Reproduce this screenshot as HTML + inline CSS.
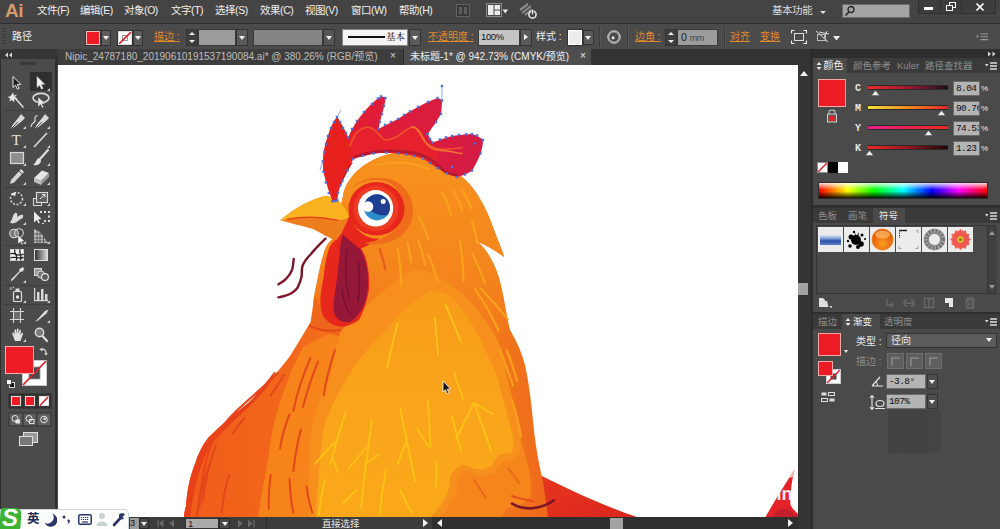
<!DOCTYPE html>
<html lang="zh-CN">
<head>
<meta charset="utf-8">
<title>Adobe Illustrator</title>
<style>
*{box-sizing:border-box;margin:0;padding:0}
html,body{width:1000px;height:529px;overflow:hidden;background:#4a4a4a}
body{position:relative;font-family:"Liberation Sans","Noto Sans CJK SC",sans-serif;font-size:11px;color:#e6e6e6;line-height:1}
.abs{position:absolute}
#menubar{left:0;top:0;width:1000px;height:23px;background:#444444}
#menubar .mi{position:absolute;top:5px;font-size:10.5px;color:#f0f0f0;white-space:nowrap;letter-spacing:-0.45px}
#ailogo{left:5px;top:1px;font-size:19px;font-weight:bold;color:#d99a6c;letter-spacing:-0.5px}
#ctrlbar{left:0;top:23px;width:1000px;height:26px;background:#4b4b4b;border-top:1px solid #2f2f2f}
#tabstrip{left:0;top:49px;width:1000px;height:16px;background:#343434}
.tab{position:absolute;top:0;height:16px;font-size:10px;color:#bdbdbd;white-space:nowrap;padding-top:3px}
#toolpanel{left:0;top:49px;width:57px;height:480px;background:#4a4a4a}
#canvas{left:58px;top:65px;width:740px;height:452px;background:#fff;overflow:hidden}
#vscroll{left:798px;top:65px;width:13px;height:464px;background:#343434;z-index:2}
#hbar{left:58px;top:517px;width:752px;height:12px;background:#3c3c3c}
#dock{left:810px;top:49px;width:190px;height:480px;background:#2e2e2e}
.panel{position:absolute;left:3px;width:187px;background:#4a4a4a}
.ptabs{position:absolute;left:0;top:0;width:187px;height:15px;background:#3a3a3a}
.ptab{position:absolute;top:0;height:15px;font-size:9.500px;color:#8e8e8e;padding-top:3px;white-space:nowrap}
.ptab.on{background:#4a4a4a;color:#f2f2f2}
.or{color:#e08a2c;text-decoration:underline}

.dd{position:absolute;background:#5a5a5a;border:1px solid #333}
.dd:after{content:"";position:absolute;left:50%;top:50%;margin:-2px 0 0 -3.5px;border:3.5px solid transparent;border-top:4px solid #f0f0f0;border-bottom:0}
.fld{position:absolute;background:#9c9c9c;border:1px solid #3a3a3a;color:#111;font-size:11px;white-space:nowrap;overflow:hidden}
.ct{position:absolute;top:8px;font-size:10px;white-space:nowrap}
.sp{position:absolute;background:#3e3e3e;border:1px solid #333}
.sp:before{content:"";position:absolute;left:2px;top:2px;border:3px solid transparent;border-bottom:3.5px solid #eee;border-top:0}
.sp:after{content:"";position:absolute;left:2px;bottom:2px;border:3px solid transparent;border-top:3.5px solid #eee;border-bottom:0}
.vsep{position:absolute;top:3px;width:1px;height:20px;background:#3a3a3a;border-right:1px solid #575757;box-sizing:content-box}

.pf{position:absolute;background:#b4b4b4;border:1px solid #6a6a6a;color:#111;font-family:"Liberation Mono","Noto Sans CJK SC",monospace;font-size:9.500px;white-space:nowrap;overflow:hidden;padding:2px 0 0 2px;letter-spacing:-0.600px}
.pl{position:absolute;font-size:10px;color:#e8e8e8;white-space:nowrap}
.pmenu{position:absolute;right:3px;top:4px}
</style>
</head>
<body>

<!-- MENUBAR -->
<div id="menubar" class="abs">
  <div id="ailogo" class="abs">Ai</div>
  <span class="mi" style="left:37px">文件(F)</span>
  <span class="mi" style="left:80px">编辑(E)</span>
  <span class="mi" style="left:124px">对象(O)</span>
  <span class="mi" style="left:171px">文字(T)</span>
  <span class="mi" style="left:215px">选择(S)</span>
  <span class="mi" style="left:260px">效果(C)</span>
  <span class="mi" style="left:305px">视图(V)</span>
  <span class="mi" style="left:351px">窗口(W)</span>
  <span class="mi" style="left:399px">帮助(H)</span>
  <span class="mi" style="left:772px;color:#dcdcdc">基本功能</span>
  <!-- Br icon -->
  <div class="abs" style="left:456px;top:4px;width:14px;height:13px;border:1px solid #626262;background:#393939"><div class="abs" style="left:2px;top:2px;width:3px;height:7px;background:#5c5c5c"></div><div class="abs" style="left:7px;top:2px;width:3px;height:7px;background:#5c5c5c"></div></div>
  <!-- arrange icon -->
  <svg class="abs" style="left:486px;top:3px" width="28" height="16" viewBox="0 0 28 16"><rect x="0.500" y="0.500" width="15" height="13" fill="#4a4a4a" stroke="#8a8a8a"/><rect x="2" y="2" width="5.500" height="10" fill="#ececec"/><rect x="8.500" y="2" width="5.500" height="4.500" fill="#ececec"/><rect x="8.500" y="7.500" width="5.500" height="4.500" fill="#ececec"/><path d="M16.500,6.500 L22,6.500 L19.250,10.500 Z" fill="#ececec"/></svg>
  <!-- sync icon -->
  <svg class="abs" style="left:519px;top:3px" width="20" height="17" viewBox="0 0 20 17"><path d="M1,7 L9,1 M3,10 L12,3 M6,12 L13,6" stroke="#8a8a8a" stroke-width="2.2" fill="none"/><circle cx="13.5" cy="11.5" r="3.6" fill="none" stroke="#f0f0f0" stroke-width="1.5"/><rect x="12.7" y="6.5" width="1.6" height="5" fill="#f0f0f0" stroke="#444" stroke-width="0.5"/></svg>
  <div class="abs" style="left:820px;top:11px;border:3px solid transparent;border-top:3.5px solid #ddd;border-bottom:0"></div>
  <!-- search -->
  <div class="abs" style="left:842px;top:4px;width:68px;height:14px;background:#a4a4a4;border:1px solid #6a6a6a"><svg class="abs" style="left:1px;top:0px" width="12" height="12" viewBox="0 0 12 12"><circle cx="7" cy="4.5" r="3" fill="none" stroke="#222" stroke-width="1.3"/><path d="M5,7 L1.5,10.5" stroke="#222" stroke-width="1.6"/></svg></div>
  <!-- window buttons -->
  <div class="abs" style="left:918px;top:0;width:23px;height:14px;background:#3d3d3d;border:1px solid #303030;border-top:0"><div class="abs" style="left:5px;top:7px;width:9px;height:3px;background:#fff"></div></div>
  <div class="abs" style="left:940px;top:0;width:22px;height:14px;background:#3d3d3d;border:1px solid #303030;border-top:0"><div class="abs" style="left:8px;top:2px;width:7px;height:6px;border:1.500px solid #fff"></div><div class="abs" style="left:5px;top:5px;width:7px;height:6px;border:1.500px solid #fff;background:#3d3d3d"></div></div>
  <div class="abs" style="left:961px;top:0;width:35px;height:14px;background:#3d3d3d;border:1px solid #303030;border-top:0"><svg class="abs" style="left:13px;top:2px" width="10" height="10" viewBox="0 0 10 10"><path d="M1.500,1.500 L8.500,8.500 M8.500,1.500 L1.500,8.500" stroke="#fff" stroke-width="1.700"/></svg></div>
</div>

<!-- CONTROL BAR -->
<div id="ctrlbar" class="abs">
  <div class="abs" style="left:3px;top:4px;width:3px;height:17px;background:repeating-linear-gradient(#333 0 1px,#4b4b4b 1px 3px)"></div>
  <span class="ct" style="left:12px;color:#f0f0f0">路径</span>
  <div class="abs" style="left:86px;top:7px;width:14px;height:14px;background:#ed1c24;border:1px solid #f4c0c0;outline:1px solid #333"></div>
  <div class="dd" style="left:101px;top:6px;width:10px;height:16px"></div>
  <div class="abs" style="left:118px;top:7px;width:14px;height:14px;background:#fff;border:1px solid #ddd;outline:1px solid #333;overflow:hidden"><svg width="12" height="12" viewBox="0 0 12 12" style="display:block"><rect x="3.500" y="3.500" width="5" height="5" fill="none" stroke="#999"/><path d="M0,12 L12,0" stroke="#e0202a" stroke-width="1.6"/></svg></div>
  <div class="dd" style="left:133px;top:6px;width:10px;height:16px"></div>
  <span class="ct or" style="left:154px">描边 :</span>
  <div class="sp" style="left:186px;top:5px;width:12px;height:17px"></div>
  <div class="fld" style="left:198px;top:5px;width:38px;height:17px"></div>
  <div class="dd" style="left:236px;top:5px;width:12px;height:17px"></div>
  <div class="fld" style="left:253px;top:5px;width:70px;height:17px;background:#858585"></div>
  <div class="dd" style="left:323px;top:5px;width:12px;height:17px;background:#555"></div>
  <div class="fld" style="left:342px;top:5px;width:66px;height:17px;background:#f4f4f4;border-color:#888"><div class="abs" style="left:5px;top:6px;width:37px;height:2px;background:#111"></div><span class="abs" style="left:43px;top:3px;font-size:9.500px;color:#111;font-family:'Liberation Serif','Noto Serif CJK SC',serif">基本</span></div>
  <div class="dd" style="left:409px;top:5px;width:12px;height:17px"></div>
  <span class="ct or" style="left:428px">不透明度 :</span>
  <div class="fld" style="left:478px;top:5px;width:42px;height:17px;background:#c4c4c4;padding:2px 0 0 2px;font-size:9.500px;letter-spacing:-0.400px">100%</div>
  <div class="abs" style="left:520px;top:5px;width:12px;height:17px;background:#5a5a5a;border:1px solid #333"><div class="abs" style="left:3px;top:4px;border:3.5px solid transparent;border-left:4px solid #f0f0f0;border-right:0"></div></div>
  <span class="ct" style="left:536px;color:#f0f0f0">样式 :</span>
  <div class="abs" style="left:568px;top:6px;width:14px;height:15px;background:#ececec;border:1px solid #fff;outline:1px solid #333"></div>
  <div class="dd" style="left:583px;top:6px;width:11px;height:15px"></div>
  <div class="vsep" style="left:599px"></div>
  <svg class="abs" style="left:607px;top:6px" width="14" height="14" viewBox="0 0 14 14"><circle cx="7" cy="7" r="6.2" fill="#8a8a8a" stroke="#d8d8d8" stroke-width="1"/><circle cx="7" cy="7" r="3.6" fill="#555" stroke="#222" stroke-width="0.8"/><circle cx="6" cy="8" r="1.4" fill="#eee"/></svg>
  <div class="vsep" style="left:627px"></div>
  <span class="ct or" style="left:635px">边角 :</span>
  <div class="sp" style="left:665px;top:5px;width:12px;height:17px"></div>
  <div class="fld" style="left:677px;top:5px;width:41px;height:17px;padding:2px 0 0 3px;font-size:10.5px;color:#222">0 <span style="font-size:9px;letter-spacing:-0.5px;color:#444">mm</span></div>
  <div class="vsep" style="left:724px"></div>
  <span class="ct or" style="left:730px">对齐</span>
  <span class="ct or" style="left:760px">变换</span>
  <svg class="abs" style="left:791px;top:6px" width="16" height="14" viewBox="0 0 16 14"><rect x="3.5" y="3.5" width="9" height="7" fill="none" stroke="#ddd" stroke-width="1"/><path d="M0.5,3.5 L0.5,0.5 L3.5,0.5 M12.5,0.5 L15.5,0.5 L15.5,3.5 M15.5,10.5 L15.5,13.5 L12.5,13.5 M3.5,13.5 L0.5,13.5 L0.5,10.5" fill="none" stroke="#eee" stroke-width="1.2"/></svg>
  <svg class="abs" style="left:815px;top:6px" width="28" height="14" viewBox="0 0 28 14"><rect x="2.5" y="4.5" width="8" height="6" fill="none" stroke="#bbb" stroke-width="1"/><path d="M1,1 L13,12 M4,2 L14,4 M12,1 L9,8" stroke="#ddd" stroke-width="1" fill="none"/><path d="M18,6 L25,6 L21.5,10.5 Z" fill="#eee"/></svg>
  <svg class="abs" style="left:976px;top:9px" width="12" height="8" viewBox="0 0 12 8"><path d="M0,2.500 L3,2.500 L1.500,5 Z" fill="#9a9a9a"/><path d="M4.500,1 L12,1 M4.500,3.800 L12,3.800 M4.500,6.600 L12,6.600" stroke="#9a9a9a" stroke-width="1.100"/></svg>
</div>

<!-- TAB STRIP -->
<div id="tabstrip" class="abs">
  <div class="tab" style="left:58px;width:346px;background:#3d3d3d;border-right:1px solid #2a2a2a;padding-left:7px"><span class="tt">Nipic_24787180_20190610191537190084.ai* @ 380.26% (RGB/预览)</span><span class="abs" style="left:332px;top:2px;color:#ddd">×</span></div>
  <div class="tab" style="left:404px;width:187px;background:#4e4e4e;color:#f0f0f0;padding-left:6px"><span class="tt">未标题-1* @ 942.73% (CMYK/预览)</span><span class="abs" style="left:176px;top:2px;color:#eee">×</span></div>
</div>

<!-- TOOL PANEL -->
<div id="toolpanel" class="abs">
<svg width="57" height="480" viewBox="0 49 57 480" style="position:absolute;left:0;top:0">
<rect x="0" y="49" width="57" height="480" fill="#2e2e2e"/>
<rect x="1" y="59" width="54" height="470" fill="#4b4b4b"/>
<rect x="0" y="49" width="57" height="10" fill="#363636"/>
<path d="M5,55 L8,52.5 L8,57.5 Z M9,55 L12,52.5 L12,57.5 Z" fill="#d8d8d8"/>
<rect x="20" y="62" width="16" height="3" fill="#3a3a3a"/>
<g stroke="#3e3e3e" stroke-width="1"><path d="M4,110.5 H52 M4,187.5 H52 M4,245.5 H52 M4,285.5 H52 M4,304.5 H52"/></g>
<!-- selected tool bg -->
<rect x="30" y="72" width="22" height="19" fill="#2f2f2f"/>
<g fill="#d6d6d6" stroke="none">
 <!-- small corner triangles -->
 <path d="M50,91 l0,-3 l-3,3z M26,129 l0,-3 l-3,3z M50,129 l0,-3 l-3,3z M26,148 l0,-3 l-3,3z M50,148 l0,-3 l-3,3z M26,166 l0,-3 l-3,3z M50,166 l0,-3 l-3,3z M26,185 l0,-3 l-3,3z M50,185 l0,-3 l-3,3z M26,206 l0,-3 l-3,3z M50,206 l0,-3 l-3,3z M26,225 l0,-3 l-3,3z M26,244 l0,-3 l-3,3z M50,244 l0,-3 l-3,3z M26,283 l0,-3 l-3,3z M26,303 l0,-3 l-3,3z M50,303 l0,-3 l-3,3z M50,323 l0,-3 l-3,3z M26,342 l0,-3 l-3,3z"/>
</g>
<!-- row1: selection arrows -->
<path d="M13,76.500 L13,87.500 L15.600,85.200 L17.400,89.200 L19.100,88.400 L17.300,84.500 L20.800,84.300 Z" fill="#1e1e1e" stroke="#e8e8e8" stroke-width="1"/>
<path d="M37,76.500 L37,87.500 L39.600,85.200 L41.400,89.200 L43.100,88.400 L41.300,84.500 L44.800,84.300 Z" fill="#f2f2f2" stroke="#bbb" stroke-width="0.500"/>
<!-- row2: wand, lasso -->
<g stroke="#dcdcdc" stroke-width="1.6" fill="none" stroke-linecap="round"><path d="M16,99 L23,107"/></g>
<path d="M13,92.5 l1,3 l3,-1 l-2,2.5 l2.5,2 l-3.2,0.3 l-0.3,3.2 l-2,-2.6 l-2.8,1.6 l1,-3 l-2.8,-1.4 l3,-0.9z" fill="#e4e4e4"/>
<ellipse cx="41" cy="98" rx="8" ry="4.6" fill="none" stroke="#dcdcdc" stroke-width="1.6"/>
<path d="M38,97 L38,107 L40.5,104.5 L42.3,108 L43.8,107.2 L42,104 L45.5,103.6 Z" fill="#e8e8e8" stroke="#444" stroke-width="0.4"/>
<!-- row3: pen tools -->
<g fill="#dadada"><path d="M21,114 L25,118 L22,121 L14.5,127 L11,128.5 L12.5,125 L18.5,117.5 Z"/><path d="M45,114 L49,118 L46,121 L38.5,127 L35,128.5 L36.5,125 L42.5,117.5 Z"/></g>
<path d="M12,128 L18,122" stroke="#4b4b4b" stroke-width="1"/><path d="M36,128 L42,122" stroke="#4b4b4b" stroke-width="1"/>
<path d="M31,127 C31,122 36,124 35,119 C34.5,117 36,115.5 37.5,116" fill="none" stroke="#dadada" stroke-width="1.2"/>
<!-- row4: T, line -->
<text x="11.500" y="145" font-family="'Liberation Serif',serif" font-size="15.500" fill="#e2e2e2">T</text>
<path d="M34,147 L47,133" stroke="#dcdcdc" stroke-width="1.6"/>
<!-- row5: rect, brush -->
<rect x="10.5" y="152.5" width="13" height="11" fill="#8e8e8e" stroke="#d8d8d8" stroke-width="1.2"/>
<path d="M48,150 L40,159" stroke="#dcdcdc" stroke-width="2.2" stroke-linecap="round"/><path d="M39,158 C36,159 36,163 33,165 C37,166 41,164 41,160.5 Z" fill="#e2e2e2"/>
<!-- row6: pencil, eraser -->
<path d="M21,169 L24,172 L14,182.5 L10,184 L11,180 Z" fill="#d8d8d8"/><path d="M19,171 L22,174" stroke="#4b4b4b" stroke-width="1"/>
<path d="M34,178 L42,170.5 L49,173 L41,181 Z" fill="#e6e6e6"/><path d="M34,178 L41,181 L41,185 L34,182 Z" fill="#bdbdbd"/><path d="M41,181 L49,173 L49,177 L41,185 Z" fill="#9a9a9a"/>
<!-- row7: rotate, scale -->
<circle cx="16.5" cy="198.5" r="6" fill="none" stroke="#d8d8d8" stroke-width="1.5" stroke-dasharray="2 1.6"/><path d="M11,193.5 L16,192 L15,196.5 Z" fill="#e8e8e8"/>
<rect x="33.5" y="198.5" width="8" height="7" fill="none" stroke="#cfcfcf" stroke-width="1.1"/><rect x="36.5" y="192.500" width="11" height="10" fill="#5e5e5e" stroke="#dcdcdc" stroke-width="1.1"/><path d="M40,199 L45,194.500 M42,194.5 L45,194.5 L45,197.5" stroke="#eee" stroke-width="1" fill="none"/>
<!-- row8: warp, free transform -->
<path d="M10,222 C13,220 12,215 15,213 C17,212 18,215 17,217 C19,216 21,214 23,215 C24,217 22,219 20,219.5 C18,220.5 17,222.5 14,223 C12,224 11,223 10,222 Z" fill="#dcdcdc"/>
<path d="M34,211.5 L34,222.5 L36.8,220 L38.4,223.5 L39.8,222.800 L38.2,219.400 L41.5,219 Z" fill="#ececec"/>
<g fill="#dcdcdc"><rect x="40" y="211" width="2" height="2"/><rect x="44" y="211" width="2" height="2"/><rect x="48" y="211" width="2" height="2"/><rect x="48" y="215.5" width="2" height="2"/><rect x="48" y="220" width="2" height="2"/><rect x="44" y="220" width="2" height="2"/><rect x="42" y="223" width="2" height="1"/></g>
<!-- row9: shape builder, perspective -->
<circle cx="14" cy="233.5" r="4.300" fill="#7a7a7a" stroke="#d6d6d6" stroke-width="1.100"/><circle cx="19" cy="233" r="4.300" fill="none" stroke="#d6d6d6" stroke-width="1.100"/><path d="M18,235 L18,244 L20.3,242 L21.7,245 L23,244.4 L21.6,241.500 L24.500,241.2 Z" fill="#f0f0f0" stroke="#444" stroke-width="0.4"/>
<path d="M34,229 L34,243 L48,243 L40,232 Z" fill="#bdbdbd"/><g stroke="#4b4b4b" stroke-width="0.8"><path d="M37,230.5 L37,243 M40,232 L40,243 M43.500,236.5 L43.500,243 M34,234 L41.5,234 M34,238 L44.500,238 M34,241 L46.500,241"/></g>
<!-- row10: mesh, gradient -->
<rect x="10.5" y="249.500" width="13" height="11" fill="#f2f2f2" stroke="#ddd" stroke-width="0.8"/><path d="M10.5,254 C14,251 17,258 23.500,254 M15,249.5 C13,253 19,256 16,260.5 M10.5,258 C14,256 18,259 23.500,257.500 M20,249.500 C19,253 22,256 20.5,260.500" fill="none" stroke="#222" stroke-width="1.3"/>
<linearGradient id="tg" x1="0" y1="0" x2="1" y2="0"><stop offset="0" stop-color="#2a2a2a"/><stop offset="1" stop-color="#e0e0e0"/></linearGradient>
<rect x="34.500" y="249.500" width="13" height="11" fill="url(#tg)" stroke="#ddd" stroke-width="1"/>
<!-- row11: eyedropper, blend -->
<path d="M22.500,267 L24.500,269 L22,272 L20.500,271.500 L13,280 L10.500,281.500 L11.500,279 L19.500,271 L19,269.500 Z" fill="#dedede"/>
<rect x="34.500" y="268.500" width="7" height="7" fill="#9a9a9a" stroke="#ddd" stroke-width="1"/><circle cx="41" cy="274.5" r="3.6" fill="#777" stroke="#ddd" stroke-width="1"/><circle cx="45" cy="277" r="3.400" fill="#5a5a5a" stroke="#e6e6e6" stroke-width="1.100"/>
<!-- row12: symbol sprayer, graph -->
<rect x="13.500" y="291.500" width="8" height="10" rx="1" fill="none" stroke="#dcdcdc" stroke-width="1.2"/><circle cx="17.5" cy="297" r="1.7" fill="#e6e6e6"/><rect x="15.500" y="288.5" width="4" height="3" fill="#dcdcdc"/><circle cx="11" cy="288.500" r="1" fill="none" stroke="#ccc" stroke-width="0.700"/><circle cx="13.5" cy="287" r="0.8" fill="#ccc"/>
<g fill="#d8d8d8"><rect x="34" y="288" width="1.2" height="13"/><rect x="34" y="300" width="14" height="1.2"/><rect x="37" y="292" width="2.500" height="8"/><rect x="41" y="289" width="2.5" height="11"/><rect x="45" y="294" width="2.500" height="6"/></g>
<!-- row13: artboard, slice -->
<g stroke="#d8d8d8" stroke-width="1.1" fill="none"><path d="M10,311.500 H24 M10,319.500 H24 M13.500,308 V323 M20.500,308 V323"/></g><rect x="14" y="312" width="6" height="7" fill="#6e6e6e"/>
<path d="M35,322 L45,311 L48.500,309.5 L46.5,313.500 L38,320.500 Z" fill="#dedede"/>
<!-- row14: hand, zoom -->
<path d="M12,333 L13.500,332.500 L14.500,335 L14.500,329.500 L16,329.500 L16.300,334 L17,328.500 L18.500,328.700 L18.300,334 L19.600,329.700 L21,330 L20.300,335 L22,332.500 L23.200,333.200 L21.500,338 L20.500,341 L15,341 Z" fill="#e2e2e2"/>
<circle cx="39.500" cy="332.5" r="4.200" fill="#7a7a7a" stroke="#dcdcdc" stroke-width="1.400"/><path d="M42.500,336 L47,341" stroke="#dcdcdc" stroke-width="2.200" stroke-linecap="round"/>
<!-- fill/stroke -->
<rect x="22.500" y="360.500" width="24" height="25" fill="#fff" stroke="#ccc" stroke-width="1"/><rect x="29" y="367" width="11" height="12" fill="#4b4b4b" stroke="#999" stroke-width="0.8"/><path d="M23,385 L46,361" stroke="#e0202a" stroke-width="1.800"/>
<rect x="5.500" y="346.500" width="28" height="27" fill="#ed1c24" stroke="#f0b0b0" stroke-width="1"/>
<path d="M41.500,349.500 C44,348.500 46,350 46,353" fill="none" stroke="#d8d8d8" stroke-width="1.200"/><path d="M39.500,349.500 L42.500,347.500 L42.500,351.500 Z M44.200,353 L47.800,353 L46,355.800 Z" fill="#d8d8d8"/>
<rect x="9.500" y="382.500" width="5" height="5" fill="#111" stroke="#eee" stroke-width="0.900"/><rect x="6.500" y="379.500" width="5" height="5" fill="#fff" stroke="#222" stroke-width="0.7"/>
<!-- color / gradient / none buttons -->
<g><rect x="9" y="394" width="14" height="14" fill="#3a3a3a" stroke="#2a2a2a"/><rect x="11.500" y="396.500" width="9" height="9" fill="#ed1c24" stroke="#eee" stroke-width="0.9"/>
<rect x="23" y="394" width="14" height="14" fill="#3a3a3a" stroke="#2a2a2a"/><rect x="25.500" y="396.500" width="9" height="9" fill="#ed1c24" stroke="#eee" stroke-width="0.9"/>
<rect x="37" y="394" width="14" height="14" fill="#3a3a3a" stroke="#2a2a2a"/><rect x="39.500" y="396.500" width="9" height="9" fill="#fff" stroke="#eee" stroke-width="0.9"/><path d="M40,405.500 L48,397" stroke="#e0202a" stroke-width="1.600"/></g>
<!-- draw modes -->
<g><rect x="9" y="413" width="14" height="13" fill="#5e5e5e" stroke="#333"/><rect x="23" y="413" width="14" height="13" fill="#5e5e5e" stroke="#333"/><rect x="37" y="413" width="14" height="13" fill="#5e5e5e" stroke="#333"/>
<circle cx="15" cy="418.500" r="3" fill="none" stroke="#e6e6e6" stroke-width="1"/><rect x="15.500" y="419.500" width="4.500" height="4" fill="#e6e6e6"/>
<circle cx="29" cy="418.500" r="3" fill="none" stroke="#e6e6e6" stroke-width="1"/><rect x="29.500" y="419.500" width="4.500" height="4" fill="none" stroke="#e6e6e6" stroke-width="0.9"/>
<circle cx="44" cy="419.500" r="3.300" fill="none" stroke="#e6e6e6" stroke-width="1"/><circle cx="44.800" cy="418.800" r="1.200" fill="#e6e6e6"/></g>
<!-- screen mode -->
<rect x="23.500" y="432.500" width="14" height="10" fill="#9a9a9a" stroke="#e0e0e0" stroke-width="1"/><rect x="19.500" y="436.500" width="13" height="9" fill="#777" stroke="#e0e0e0" stroke-width="1"/>
</svg>

</div>

<!-- CANVAS -->
<div id="canvas" class="abs">
<svg width="740" height="452" viewBox="58 65 740 452" style="position:absolute;left:0;top:0">
<defs>
  <linearGradient id="gBody" gradientUnits="userSpaceOnUse" x1="184" y1="0" x2="548" y2="0">
    <stop offset="0" stop-color="#f05c1a"/><stop offset="0.3" stop-color="#f2681b"/><stop offset="0.65" stop-color="#f47e1c"/><stop offset="0.85" stop-color="#f2781b"/><stop offset="1" stop-color="#ee691b"/>
  </linearGradient>
  <linearGradient id="gHead" gradientUnits="userSpaceOnUse" x1="0" y1="150" x2="0" y2="340">
    <stop offset="0" stop-color="#f7921d"/><stop offset="0.55" stop-color="#f5871d"/><stop offset="1" stop-color="#f5871d" stop-opacity="0"/>
  </linearGradient>
  <linearGradient id="gChest" gradientUnits="userSpaceOnUse" x1="0" y1="280" x2="0" y2="518">
    <stop offset="0" stop-color="#f89a1b"/><stop offset="0.5" stop-color="#f9a41a"/><stop offset="1" stop-color="#faa81a"/>
  </linearGradient>
  <linearGradient id="gComb" gradientUnits="userSpaceOnUse" x1="324" y1="0" x2="484" y2="0">
    <stop offset="0" stop-color="#e8201f"/><stop offset="0.3" stop-color="#e01d38"/><stop offset="1" stop-color="#d51b44"/>
  </linearGradient>
  <linearGradient id="gRed" x1="0" y1="0" x2="1" y2="1">
    <stop offset="0" stop-color="#ea3a1d"/><stop offset="1" stop-color="#d9251d"/>
  </linearGradient>
</defs>

<!-- red body behind -->
<path d="M530,470 C560,485 600,505 640,518 L520,518 Z" fill="url(#gRed)"/>
<!-- right-bottom red feather -->
<path d="M794.600,469.400 C785,484 775,500 765,518 L798,518 L798,514 C794,510 791,507 790.400,504 C790,492 792,480 794.600,469.400 Z" fill="#e3222a"/>
<path d="M794.600,469.400 C792.500,472 790.500,475 789,478 L793,477 Z" fill="#f6b8b8"/>
<path d="M776,512 C780,508 786,508 790,511 C793,513 796,515 798,516 L798,518 L772,518 Z" fill="#c21f2c"/>
<text x="776.500" y="500.300" font-family="'Liberation Sans',sans-serif" font-weight="bold" font-size="18" fill="#ffffff" opacity="0.900">in</text>
<!-- body silhouette (outer, dark orange) -->
<path id="sil" d="M343,196 C346,176 368,156 400,152 C430,150 452,164 462,177 C474,186 486,206 494,230 C499,243 503,252 504,257 C495,250 486,245 478,242 C484,248 488,253 491,259 C497,270 500,280 502,290 C505,304 507,318 510,330 C517,342 522,353 525,365 C530,388 532,410 534,430 C536,450 540,468 543,482 C545,495 547,507 548,518 L184,518 C184,512 185,510 186,506 C187,490 190,476 195,464 C198,454 202,446 208,438 C220,426 234,414 247,404 C262,390 278,372 290,356 C297,345 304,333 310.500,322 C312,314 313,306 313.6,299 C315,291 316.5,284 318,277 C320,266 323,255 326,247 C328,243 331,240 334,238 Z" fill="url(#gBody)"/>
<!-- red-orange rim along left edge -->
<path d="M184,518 C184,512 185,510 186,506 C187,490 190,476 195,464 C198,454 202,446 208,438 C220,426 234,414 247,404 C258,394 268,383 277,372 C273,380 264,392 252,404 C240,415 227,427 215,440 C208,449 203,459 200,470 C195,486 192,502 190,518 Z" fill="#e8411a"/>
<path d="M277.800,373 C265,386 250,398 236.500,410.800 C227,420 218,431 212,442.800 C207,455 204,467 202.600,480 C200,493 198,506 197,518" fill="none" stroke="#e8451a" stroke-width="2.200" stroke-linecap="round"/>
<!-- head overlay -->
<path d="M343,196 C346,176 368,156 400,152 C430,150 452,164 462,177 C474,186 486,206 494,230 C499,243 503,252 504,257 C495,250 486,245 478,242 C484,248 488,253 491,259 C497,270 500,280 502,290 C505,304 507,318 510,330 L512,345 L330,345 L311,322 C312,314 313,306 313.6,299 C315,291 316.5,284 318,277 C320,266 323,255 326,247 C328,243 331,240 334,238 Z" fill="url(#gHead)"/>
<!-- shadow under face -->
<path d="M315,296 C322,316 340,330 360,324 C382,314 404,298 430,290 C410,300 394,314 382,332 C362,340 338,338 320,330 C316,326 312,322 311,322 C313,314 314,306 315,296 Z" fill="#ee661b"/>
<!-- mid band -->
<path d="M330,334 C320,338 311,342 303,347.600 C296,360 290,373 285.500,386.600 C280,401 276,416 272.500,430 C270,444 268,459 266,473 C263,485 261,497 259.600,507.800 L258,518 L420,518 L420,330 C390,338 360,342 330,334 Z" fill="#f6841b"/>
<!-- lower mid-orange layer under chest -->
<path d="M440,470 L521,440 C524,450 527,460 529,470 C531,480 532,488 531,494 C528,502 518,507 507.600,508 C504,512 502,515 500,518 L420,518 Z" fill="#f6851c"/>
<!-- chest outer -->
<path d="M414.800,269.500 C400,277 386,288 374,299 C367,305 360,311 353.600,317 C348,322 344,328 340,333 C336,347 333,362 330.400,377 C323,391 318,406 313,420.400 C310,435 309,450 308.700,464 C308.500,482 308.700,500 309,518 L440,518 C443,515 446,512 448,508 C452,503 455,498 457,492.600 C458,488 458,484 457,479.400 C459,475 462,472 465.800,470.600 C470,470 473,473 476.800,475 C483,476 489,475 494.400,472.800 C498,470 500,465 503,461.800 C508,460 512,461 516.400,459.600 C519,455 520,449 520.800,444 C520.900,441 521,438 521,436 C520,431 518.500,425 517,420.400 C514,406 511,391 507,377 C505,365 502,353 498.700,342 C492,330 484,318 476,308 C468,298 459,290 448.800,283 C438,276 426,270 414.800,269.500 Z" fill="#f68f1c"/>
<!-- chest inner -->
<path d="M430.700,291 C419,297 409,305 399,314.800 C393,321 388,327 383,333 C380,336 377,339 374,342 C364,353 355,365 347.800,377 C339,391 332,405 326,420 C322,435 320.500,450 319.600,464 C318,482 317,500 316,518 L428,518 C433,515 437,511 440,506 C445,500 448,494 449,488 C450,484 449,480 450,476 C453,471 457,467 462,465 C467,465 471,468 476,469 C482,470 487,469 491,466 C494,462 496,458 499,455 C504,453 508,454 512,452 C513,448 513.500,444 513.500,440 C512.500,433 510.500,426 508.700,420 C505,405 501,391 497,377 C495,371 492.500,365 489.700,360 C486,350 481,340 476,330.700 C469,319 462,308 453.400,299 C447,294 439,291 430.700,291 Z" fill="url(#gChest)"/>
<g fill="none" stroke-linecap="round">
  <path d="M474,480 C478,486 482,492 486,498" stroke="#e8641b" stroke-width="1.600"/>
  <path d="M508,468 C512,473 516,478 519,483" stroke="#e8641b" stroke-width="1.600"/>
  <path d="M512,496 C519,498.500 527,500 534,501.400" stroke="#e8501b" stroke-width="2"/>
  <path d="M512,503.600 C519,507.500 527,509 534,508 C542,507 549,504 553.800,500.300" stroke="#7d152a" stroke-width="2.600"/>
</g>
<!-- dark strokes on left body -->
<g fill="none" stroke="#e3471a" stroke-width="2" stroke-linecap="round">
  <path d="M274.500,373 C267,383 259,392 251.800,401.300"/>
  <path d="M284,374.800 C280,382 275,389 270.700,395.600"/>
  <path d="M244.300,418.300 C240,423 236,428 233,433.400"/>
  <path d="M216,444.800 C209,463 205,482 202.700,501.500"/>
  <path d="M229,475 C225,487 223,500 221.600,512.800"/>
  <path d="M210,463.700 C204,478 201,494 199,509"/>
  <path d="M310.400,357.800 C303,375 297,393 293.400,410.700"/>
  <path d="M318,361.600 C312,376 307,392 302.900,407"/>
  <path d="M335,350 C330,365 326,380 323.700,395.600"/>
  <path d="M289.600,414.500 C285,425 282,437 280,448.500"/>
  <path d="M301,429.600 C297,443 295,457 293.400,471"/>
  <path d="M270.700,475 C269,486 268.500,498 268.800,509"/>
  <path d="M289.600,478.800 C290,490 291,502 293.400,512.800"/>
  <path d="M306.700,486.400 C307.500,495 309.500,504 312.300,512.800"/>
  <path d="M310,326 C318,330 328,332 340,330"/>
</g>
<!-- orange strokes on right side neck -->
<g fill="none" stroke="#f9a31d" stroke-width="2.100" stroke-linecap="round">
  <path d="M441.600,192.400 C446,199 449,207 451,215"/>
  <path d="M453,190.500 C457,197 460,204 462.400,211"/>
  <path d="M462.400,190.500 C466,196 469,203 471.800,209"/>
  <path d="M419,217 C423,224 426,232 428.400,239.600"/>
  <path d="M471.800,220.700 C474,228 476,236 477.500,243.400"/>
  <path d="M407.600,243.400 C409,250 410.500,256 411.300,262.300"/>
  <path d="M397.800,249 C400,261 401,273 401.200,285.400"/>
  <path d="M418.200,240 C421,248 423.500,257 425,265"/>
  <path d="M428.400,254.800 C432,263 435,272 437.800,281"/>
  <path d="M460,240 C462,253 463,267 463.600,280.800"/>
  <path d="M472.700,253.600 C477,263 481,273 485,283"/>
  <path d="M475,288.800 C484,302 492,316 498.700,330.700"/>
  <path d="M480.600,288.800 C490,298 499,308 507.800,319.400"/>
  <path d="M500,350 C505,362 509,374 513,385.600"/>
  <path d="M506.500,350 C511,360 514,371 517,381"/>
  <path d="M512,400 C516,412 519,424 521,436"/>
  <path d="M378,165 C394,161 412,162 428,169"/>
</g>
<path d="M379.700,249 C382,256 384,263 385.400,269.500" fill="none" stroke="#ea5a1b" stroke-width="2" stroke-linecap="round"/>
<!-- yellow strokes in chest -->
<g fill="none" stroke="#fdc216" stroke-width="1.900" stroke-linecap="round">
  <path d="M397.800,322.600 C394,338 390,353 387,368"/>
  <path d="M434.800,318 C436,330 437,343 438,355"/>
  <path d="M445.700,305 C451,317 456,330 461,342"/>
  <path d="M454,372.600 C457,381 460,390 463,398.700"/>
  <path d="M345.700,411.700 C340,429 335,447 330.400,464"/>
  <path d="M334.800,442 C328,450 321,457 315,464"/>
  <path d="M332.600,458 C334,463 336,468 338,472"/>
  <path d="M371.700,420.400 C368,449 364,478 361,507.400"/>
  <path d="M365,464 C369,461 374,458 378,455"/>
  <path d="M366,448 C360,455 354,462 349,468"/>
  <path d="M400,407.400 C405,432 410,457 415,481"/>
  <path d="M406.500,442 C403,450 400,457 397.800,464"/>
  <path d="M428,401 C429,416 430,431 430.400,446.500"/>
  <path d="M417.400,429 C421,435 425,441 428,446.500"/>
  <path d="M452,416 C455,428 458,440 461,451"/>
  <path d="M474,403 C468,415 462,427 456.500,438"/>
  <path d="M474,403 C480,419 486,435 491,451"/>
  <path d="M474,403 C481,407 487,411 493.500,414"/>
  <path d="M343.500,503 C348,498 352,494 356.500,490"/>
  <path d="M386,470 C383,485 381,500 380,514"/>
  <path d="M436,462 C437,470 437,478 436,486"/>
  <path d="M325,480 C322,492 320,504 319,515"/>
  <path d="M400,490 C404,498 408,506 412,513"/>
</g>
<!-- wattle -->
<path d="M342,233.6 C337,237 333,242 329.5,247 C326,257 324.5,267 323.8,276.7 C322,284 321,292 320.4,299 C320,305 321,310 322.7,315 C325,319 328,322 331.7,324 C336,326 340,327 345,326.6 C350,325 355,323 359,319.8 C363,313 366,304 368,294.8 C369.5,289 369.5,283 369,276.7 C368.5,270 367.5,264 365.8,258.5 C364,252 360.5,247 356.7,242.7 C352,238 347,235 342,233.6 Z" fill="#e8271c"/>
<path d="M343,233.6 C341,240 340,247 339.7,254 C338.5,262 338,270 337.4,276.7 C336,284 335,292 334,299.4 C333.5,304 333.5,309 334,313 C335.5,317 338,319.5 340.8,321 C344,322.5 347,322.5 350,322 C354,319.5 358,315.5 361,310.7 C364,306 366,300.5 367,294.8 C368,289 368.3,283 368,276.7 C367.5,270 366.5,264 364.6,258.5 C362.5,252 359.5,247 355.6,242.7 C353.5,240 351.5,238 348.8,236 Z" fill="#961838"/>
<g fill="none" stroke="#6f1030" stroke-width="1.3" stroke-linecap="round"><path d="M347,250 C345,266 345,282 349,298"/><path d="M358,262 C360,276 360,290 358,302"/><path d="M342,290 C343,300 346,308 350,314"/></g>
<!-- red face patch under beak -->
<path d="M334,240 C340,234 346,225 349.500,213 C352,224 358,232 366,236 C370,238 374,239 379,238.500 C373,243 366,246.500 360,249 C354,244 347,239 342,233.600 Z" fill="#e8271c"/>
<!-- tongue-like squiggles -->
<g fill="none" stroke="#7d152a" stroke-width="2.400" stroke-linecap="round">
  <path d="M325.500,238.700 C320,244 315,249 311,254 C307,258 304,262 302.500,266 C301.500,269 301.800,273 301.700,276 C301,280 299.500,284 297.400,288 C294,292 290,294.500 285.500,295.700 C283,296.500 280.500,297 278.400,297.400"/>
  <path d="M293.700,259 C293.500,262.500 293,266 292.300,269.300 C291,273 288.500,276.500 285.500,279.500 C283,281.500 280.500,283 278.400,284.300"/>
</g>
<!-- eye -->
<path d="M352,188 C362,176 392,172 406,190 C418,206 414,228 398,238 C388,244 374,246 364,243 C390,240 404,226 404,208 C404,192 392,180 376,180 C366,180 358,183 352,188 Z" fill="#ef6c1b"/>
<ellipse cx="376.500" cy="208.800" rx="28" ry="26.800" fill="#e8271c"/>
<ellipse cx="376" cy="208.500" rx="22.500" ry="22.500" fill="#ee3b24"/>
<ellipse cx="375.600" cy="208.300" rx="17.600" ry="18.300" fill="#ffffff"/>
<circle cx="377" cy="207.400" r="13" fill="#2a8dc8"/>
<path d="M364.300,204.500 A13,13 0 1 1 387.500,215 C379,216.500 370,212.500 364.300,204.500 Z" fill="#1f3f94"/>
<circle cx="368" cy="206.600" r="5.300" fill="#ffffff"/>
<circle cx="383.200" cy="201.500" r="2.500" fill="#ffffff"/>
<!-- beak -->
<path d="M280.3,220.3 C290,212 298,207 304,204 C312,200 320,197 326,195.8 C332,197 336,199 338.5,200.8 C343,205 347,211 349.2,216.8 C347,222 344,228 341.5,233 C339.5,236 337.5,239 335.5,240.6 C332,239 329,237.5 326,236 C321,233 316,230.5 312.5,228.7 C306,227 300,225.5 295.5,224.5 C290,223 285,221.5 280.3,220.3 Z" fill="#ee7e1d"/>
<path d="M280.3,220.3 C290,212 298,207 304,204 C312,200 320,197 326,195.8 C332,197 336,199 338.5,200.8 C343,205 347,211 349.2,216.8 C346,219 342,220 338,220.2 C322,218 302,217.5 287,219.4 Z" fill="#fbb220"/>
<path d="M287,219.4 C302,216.5 322,217 338,220.4" fill="none" stroke="#e2401c" stroke-width="1.4" stroke-linecap="round"/>

<!-- comb -->
<path d="M332.700,201.300 C329.500,193 326,183 323.600,171.800 C323,168 322.900,164 322.900,161.200 C323.500,152 325,144 328,136 C330,129 333,122 337,117 C341,123 345,130 348,137.6 C352,128 358,119 364,112 C369,106 375,100 381,96.5 C383,96.5 384.5,97 385.5,98 C385,104 383.5,109 382,114 C380.5,119 379.5,124 378.6,129 C385,125 392,122 398,119 C405,114 412,110 418,107 C425,103 432,100 437.6,98 C439.5,98.5 441,99.5 442,100.7 C442,105 441.5,110 441,114 C437,121 432,128 427.8,134 C429,137 431,140 432.7,142.5 C439,140 446,137.5 452,136 C459,135 466,134 472,134 C476,135 480,137 483,140 C483,145 482,149 480.6,153.5 C478,160 475,166 472,170.7 C467,174 462,176 457,177 C450,175 443,172 437.6,168 C432,164.5 427,161 423,158.5 C415,156 406,154 398,153.5 C390,152.5 381,152.5 373.7,153.5 C367,155 360,156.500 353,159 C351,163 349.500,167 347.800,170.300 C346,174 344,177.500 342.500,180.800 C341.500,182.500 341,184 340.300,185.400 C339.500,188 338.500,190.500 338,193 C337.700,195.500 337.400,198 337.200,200.500 C336,201.300 334.500,201.500 332.700,201.300 Z" fill="url(#gComb)"/>
<!-- comb left brighter part -->
<path d="M332.700,201.300 C329.500,193 326,183 323.600,171.800 C323,168 322.900,164 322.900,161.200 C323.500,152 325,144 328,136 C330,129 333,122 337,117 C341,123 345,130 348,137.6 C349,146 351,152 353,159 C351,163 349.500,167 347.800,170.300 C346,174 344,177.500 342.500,180.800 C341.500,182.500 341,184 340.300,185.400 C339.500,188 338.500,190.500 338,193 C337.700,195.500 337.400,198 337.200,200.500 C336,201.300 334.500,201.500 332.700,201.300 Z" fill="#e8211f"/>
<path d="M350,146 C352,140 354,136 356.500,132.700 C361,128 367,126.500 371,127.700 C374,129 376.500,131.500 378.600,134 C381,137 383.500,139.500 386,140 C390,140 394,138 398,136 C402,133 406,129 410.500,127.700 C414,127 417.500,128.500 420,131.400 C422,134.500 423.500,138 425,141 C428,145 432.500,147.500 437.600,148.600 C438.500,155 438.500,162 437.600,168 C432,164.500 427,161 423,158.500 C415,156 406,154 398,153.500 C390,152.500 381,152.500 373.700,153.500 C367,155 360,156.500 353,159 Z" fill="#e6212d"/>
<g fill="none" stroke-linecap="round">
  <path d="M350,146 C352,140 354,136 356.500,132.700 C361,128 367,126.500 371,127.700 C374,129 376.500,131.500 378.600,134 C381,137 383.500,139.500 386,140 C390,140 394,138 398,136 C402,133 406,129 410.500,127.700 C414,127 417.500,128.500 420,131.400 C422,134.500 423.500,138 425,141 C428,145 432.500,147.500 437.600,148.600 C446,150 454,149 462,147.400" stroke="#f0542a" stroke-width="1.500"/>
  <path d="M411.800,127 C413,126.800 414.500,127 415.500,127.700 C418.500,131 421,135 422.900,138.800 C425.500,143 429,146.500 432.700,148.600 C437.500,150.500 442.500,151 447.400,151 C452.500,151.800 457.500,152.800 462,153.500" stroke="#f47a30" stroke-width="1.300"/>
  <path d="M354,157.500 C361,154.500 368,153 375,151.800 C388,150.500 402,151 414,152.800 C420,154 426,156.500 431,159.500 C436,163 440,167.500 444.500,171.500 C449,174 453,175 457,175.300" stroke="#b3182f" stroke-width="2.400"/>
  <path d="M340,186 C343,178 347,170 352,163" stroke="#b81a2a" stroke-width="1.200"/>
</g>
<!-- mouse cursor -->
<path d="M443,381 L443,392 L445.500,389.800 L447.300,393.800 L449,393 L447.200,389.200 L450.500,389 Z" fill="#111" stroke="#fff" stroke-width="0.800"/>
<!-- selection anchor points -->
<g fill="#5a7fe0" stroke="#3a5fd0" stroke-width="0.4"><rect x="331.7" y="200.3" width="2" height="2"/><rect x="334.0" y="200.0" width="2" height="2"/><rect x="336.2" y="199.5" width="2" height="2"/><rect x="327.9" y="192.0" width="2" height="2"/><rect x="324.9" y="181.4" width="2" height="2"/><rect x="322.6" y="170.8" width="2" height="2"/><rect x="321.9" y="160.2" width="2" height="2"/><rect x="323.5" y="151.0" width="2" height="2"/><rect x="325.0" y="143.0" width="2" height="2"/><rect x="327.0" y="135.0" width="2" height="2"/><rect x="330.0" y="127.0" width="2" height="2"/><rect x="333.0" y="121.0" width="2" height="2"/><rect x="336.0" y="116.0" width="2" height="2"/><rect x="339.0" y="121.0" width="2" height="2"/><rect x="342.0" y="127.0" width="2" height="2"/><rect x="345.0" y="132.0" width="2" height="2"/><rect x="347.0" y="136.6" width="2" height="2"/><rect x="351.0" y="128.0" width="2" height="2"/><rect x="356.0" y="120.0" width="2" height="2"/><rect x="363.0" y="111.0" width="2" height="2"/><rect x="371.0" y="103.0" width="2" height="2"/><rect x="377.0" y="97.5" width="2" height="2"/><rect x="380.0" y="95.5" width="2" height="2"/><rect x="384.5" y="97.0" width="2" height="2"/><rect x="383.0" y="105.0" width="2" height="2"/><rect x="381.0" y="113.0" width="2" height="2"/><rect x="379.0" y="121.0" width="2" height="2"/><rect x="377.6" y="128.0" width="2" height="2"/><rect x="384.0" y="124.0" width="2" height="2"/><rect x="390.0" y="121.0" width="2" height="2"/><rect x="397.0" y="118.0" width="2" height="2"/><rect x="403.0" y="114.0" width="2" height="2"/><rect x="409.0" y="110.5" width="2" height="2"/><rect x="417.0" y="106.0" width="2" height="2"/><rect x="427.0" y="101.0" width="2" height="2"/><rect x="436.6" y="97.0" width="2" height="2"/><rect x="441.0" y="99.7" width="2" height="2"/><rect x="441.0" y="85.0" width="2" height="2"/><rect x="440.0" y="113.0" width="2" height="2"/><rect x="435.0" y="121.0" width="2" height="2"/><rect x="426.8" y="133.0" width="2" height="2"/><rect x="429.0" y="138.0" width="2" height="2"/><rect x="431.7" y="141.5" width="2" height="2"/><rect x="439.0" y="138.5" width="2" height="2"/><rect x="445.0" y="136.5" width="2" height="2"/><rect x="451.0" y="135.0" width="2" height="2"/><rect x="458.0" y="134.0" width="2" height="2"/><rect x="465.0" y="133.3" width="2" height="2"/><rect x="471.0" y="133.0" width="2" height="2"/><rect x="476.0" y="134.5" width="2" height="2"/><rect x="482.0" y="139.0" width="2" height="2"/><rect x="474.0" y="142.5" width="2" height="2"/><rect x="479.6" y="152.5" width="2" height="2"/><rect x="471.0" y="169.7" width="2" height="2"/><rect x="464.0" y="173.5" width="2" height="2"/><rect x="456.0" y="176.0" width="2" height="2"/><rect x="451.0" y="166.0" width="2" height="2"/><rect x="446.0" y="172.5" width="2" height="2"/><rect x="436.6" y="167.0" width="2" height="2"/><rect x="429.0" y="162.0" width="2" height="2"/><rect x="422.0" y="157.5" width="2" height="2"/><rect x="413.0" y="155.0" width="2" height="2"/><rect x="405.0" y="153.3" width="2" height="2"/><rect x="397.0" y="152.5" width="2" height="2"/><rect x="385.0" y="151.7" width="2" height="2"/><rect x="372.7" y="152.5" width="2" height="2"/><rect x="362.0" y="154.8" width="2" height="2"/><rect x="352.0" y="158.0" width="2" height="2"/><rect x="346.8" y="169.3" width="2" height="2"/><rect x="341.5" y="179.8" width="2" height="2"/><rect x="339.3" y="184.4" width="2" height="2"/><rect x="337.0" y="192.0" width="2" height="2"/><path d="M442,100.7 L442,86" stroke="#5a7fe0" stroke-width="0.7" fill="none"/><path d="M337,117 L341,110" stroke="#5a7fe0" stroke-width="0.7" fill="none"/><path d="M322.9,161.2 L320,170" stroke="#5a7fe0" stroke-width="0.7" fill="none"/></g>
</svg>

</div>

<div id="vscroll" class="abs"><div class="abs" style="left:2px;top:6px;border:4px solid transparent;border-bottom:5px solid #f0f0f0;border-top:0"></div><div class="abs" style="left:0;top:218px;width:10px;height:12px;background:#a2a2a2"></div></div>
<div id="hbar" class="abs">
  <div class="abs" style="left:72px;top:1px;width:9px;height:11px;background:#9c9c9c;color:#111;font-size:9px;padding-top:1px;overflow:hidden">3</div>
  <div class="abs" style="left:81px;top:1px;width:10px;height:11px;background:#4a4a4a;border:1px solid #2a2a2a"><div class="abs" style="left:1px;top:3px;border:3px solid transparent;border-top:4px solid #f0f0f0;border-bottom:0"></div></div>
  <svg class="abs" style="left:99px;top:2px" width="22" height="9" viewBox="0 0 22 9"><path d="M1,0.500 V8.500" stroke="#6a6a6a" stroke-width="1.200"/><path d="M6.500,0.500 L2,4.500 L6.500,8.500 Z M17,0.500 L12.500,4.500 L17,8.500 Z" fill="#6a6a6a"/></svg>
  <div class="abs" style="left:127px;top:1px;width:34px;height:11px;background:#aaa;color:#111;font-size:9.500px;padding:0 0 0 2px;border:1px solid #333">1</div>
  <div class="abs" style="left:161px;top:1px;width:11px;height:11px;background:#4a4a4a;border:1px solid #2a2a2a"><div class="abs" style="left:1.500px;top:3px;border:3px solid transparent;border-top:4px solid #f0f0f0;border-bottom:0"></div></div>
  <svg class="abs" style="left:178px;top:2px" width="22" height="9" viewBox="0 0 22 9"><path d="M2,0.500 L6.500,4.500 L2,8.500 Z M12,0.500 L16.500,4.500 L12,8.500 Z" fill="#6a6a6a"/><path d="M18,0.500 V8.500" stroke="#6a6a6a" stroke-width="1.200"/></svg>
  <div class="abs" style="left:208px;top:0;width:1px;height:12px;background:#2a2a2a"></div>
  <span class="abs" style="left:264px;top:2px;font-size:9.500px;color:#e8e8e8;letter-spacing:-0.200px;white-space:nowrap">直接选择</span>
  <div class="abs" style="left:365px;top:2px;border:4px solid transparent;border-left:5px solid #f0f0f0;border-right:0"></div>
  <div class="abs" style="left:374px;top:0;width:378px;height:12px;background:#2f2f2f"></div>
  <div class="abs" style="left:379px;top:2px;border:4px solid transparent;border-right:5px solid #f0f0f0;border-left:0"></div>
  <div class="abs" style="left:552px;top:1px;width:13px;height:11px;background:#a2a2a2"></div>
  <div class="abs" style="left:730px;top:2px;border:4px solid transparent;border-left:5px solid #f0f0f0;border-right:0"></div>
</div>
<!-- IME toolbar -->
<div class="abs" id="ime" style="left:0;top:509px;width:129px;height:20px;background:#fdfdfd;border-radius:0 5px 0 0;border:1px solid #c8d4e0;border-left:0;border-bottom:0">
  <div class="abs" style="left:0;top:-2px;width:21px;height:22px;background:#3db234;border-radius:3px 6px 3px 3px;transform:skewX(-4deg)"></div>
  <span class="abs" style="left:2px;top:-4px;font-size:24px;font-weight:bold;font-style:italic;color:#fff;font-family:'Liberation Sans',sans-serif">S</span>
  <span class="abs" style="left:27px;top:3px;font-size:12.500px;font-weight:bold;color:#1f2a55">英</span>
  <svg class="abs" style="left:44px;top:3px" width="13" height="14" viewBox="0 0 13 14"><path d="M8.500,0.800 A6.600,6.600 0 1 1 0.800,10 A6.200,6.200 0 0 0 8.500,0.800 Z" fill="#2a3568"/></svg>
  <svg class="abs" style="left:62px;top:4px" width="10" height="12" viewBox="0 0 10 12"><circle cx="2" cy="3" r="1.500" fill="#2a3568"/><path d="M6.500,5.500 C8.500,5.500 8.500,9 5.500,10 C6.500,8.500 6.500,8 5.500,7 C5.300,6 5.800,5.500 6.500,5.500 Z" fill="#2a3568"/></svg>
  <svg class="abs" style="left:78px;top:4px" width="14" height="11" viewBox="0 0 14 11"><rect x="0.750" y="0.750" width="12.500" height="9.500" rx="1.500" fill="#fff" stroke="#2a3568" stroke-width="1.500"/><path d="M3,3.500 H11 M3,5.500 H11" stroke="#2a3568" stroke-width="1" stroke-dasharray="1.200 0.800"/><path d="M4,8 H10" stroke="#2a3568" stroke-width="1.200"/></svg>
  <svg class="abs" style="left:96px;top:2px" width="12" height="15" viewBox="0 0 12 15"><circle cx="6" cy="4" r="3" fill="#c4d4cc"/><path d="M0.500,14 C0.500,8 11.500,8 11.500,14 Z" fill="#c4d4cc"/></svg>
  <svg class="abs" style="left:112px;top:2px" width="14" height="15" viewBox="0 0 14 15"><path d="M2,13 L8,6.500" stroke="#2a3568" stroke-width="2.600" stroke-linecap="round"/><path d="M7,2.500 C9,0.500 12,1 13,2.500 L10.500,5 L12,6.500 C10.500,8 8,7.500 7,6 Z" fill="#2a3568"/></svg>
</div>

<!-- RIGHT DOCK -->
<div id="dock" class="abs">
  <div class="abs" style="left:0;top:0;width:3px;height:480px;background:#2c2c2c"></div>
  <div class="abs" style="left:3px;top:0;width:187px;height:9px;background:#2e2e2e"></div>
  <svg class="abs" style="left:178px;top:2px" width="9" height="6" viewBox="0 0 9 6"><path d="M0,0.500 L3,3 L0,5.500 Z M4.500,0.500 L7.500,3 L4.500,5.500 Z" fill="#d8d8d8"/></svg>

  <!-- COLOR PANEL -->
  <div class="panel" style="top:9px;height:147px">
    <div class="ptabs">
      <div class="ptab on" style="left:0;width:34px;padding-left:10.500px;font-size:10px"><svg class="abs" style="left:2.500px;top:3px" width="6" height="10" viewBox="0 0 6 10"><path d="M0.500,4 L3,1 L5.500,4 Z M0.500,6 L3,9 L5.500,6 Z" fill="#e6e6e6"/></svg>颜色</div>
      <div class="ptab" style="left:40px">颜色参考</div>
      <div class="ptab" style="left:84px">Kuler</div>
      <div class="ptab" style="left:112px">路径查找器</div>
      <svg class="pmenu" width="12" height="8" viewBox="0 0 12 8"><path d="M0,2 L3.500,2 L1.750,4.500 Z" fill="#ddd"/><path d="M5,1 H12 M5,4 H12 M5,7 H12" stroke="#ddd" stroke-width="1.300"/></svg>
    </div>
    <div class="abs" style="left:5px;top:21px;width:28px;height:28px;background:#ed1c24;border:1px solid #f2a8a8"></div>
    <svg class="abs" style="left:13px;top:51px" width="12" height="14" viewBox="0 0 12 14"><path d="M3,5 V3 C3,0.500 9,0.500 9,3 V5" fill="none" stroke="#bdbdbd" stroke-width="1.2"/><rect x="1.500" y="5" width="9" height="8" fill="#5a5a5a" stroke="#cfcfcf" stroke-width="1"/><rect x="3.500" y="7" width="5" height="5" fill="#ed1c24"/></svg>
    <span class="pl" style="left:42px;top:26px;font-family:'Liberation Mono',monospace;font-weight:bold">C</span>
    <span class="pl" style="left:42px;top:46px;font-family:'Liberation Mono',monospace;font-weight:bold">M</span>
    <span class="pl" style="left:42px;top:66px;font-family:'Liberation Mono',monospace;font-weight:bold">Y</span>
    <span class="pl" style="left:42px;top:86px;font-family:'Liberation Mono',monospace;font-weight:bold">K</span>
    <div class="abs" style="left:55px;top:27px;width:80px;height:5px;background:linear-gradient(90deg,#ee2a2a,#a01830 50%,#1a1020);border:1px solid #2a2a2a;border-left:0;border-right:0"></div>
    <div class="abs" style="left:55px;top:47px;width:80px;height:5px;background:linear-gradient(90deg,#f4e23a,#f08a22 50%,#e8222a);border:1px solid #2a2a2a;border-left:0;border-right:0"></div>
    <div class="abs" style="left:55px;top:67px;width:80px;height:5px;background:linear-gradient(90deg,#e8208a,#ea2050 50%,#ee2a1e);border:1px solid #2a2a2a;border-left:0;border-right:0"></div>
    <div class="abs" style="left:55px;top:87px;width:80px;height:5px;background:linear-gradient(90deg,#ee2a2a,#981620 50%,#180808);border:1px solid #2a2a2a;border-left:0;border-right:0"></div>
    <svg class="abs" style="left:58px;top:32px" width="9" height="6" viewBox="0 0 9 6"><path d="M4.500,0.500 L8.500,5.500 L0.500,5.500 Z" fill="#f4f4f4" stroke="#555" stroke-width="0.600"/></svg>
    <svg class="abs" style="left:124px;top:52px" width="9" height="6" viewBox="0 0 9 6"><path d="M4.500,0.500 L8.500,5.500 L0.500,5.500 Z" fill="#f4f4f4" stroke="#555" stroke-width="0.600"/></svg>
    <svg class="abs" style="left:111px;top:72px" width="9" height="6" viewBox="0 0 9 6"><path d="M4.500,0.500 L8.500,5.500 L0.500,5.500 Z" fill="#f4f4f4" stroke="#555" stroke-width="0.600"/></svg>
    <svg class="abs" style="left:52px;top:92px" width="9" height="6" viewBox="0 0 9 6"><path d="M4.500,0.500 L8.500,5.500 L0.500,5.500 Z" fill="#f4f4f4" stroke="#555" stroke-width="0.600"/></svg>
    <div class="pf" style="left:140px;top:23px;width:27px;height:15px">8.04</div>
    <div class="pf" style="left:140px;top:43px;width:27px;height:15px">90.76</div>
    <div class="pf" style="left:140px;top:63px;width:27px;height:15px">74.53</div>
    <div class="pf" style="left:140px;top:83px;width:27px;height:15px">1.23</div>
    <span class="pl" style="left:168px;top:26px;font-size:8px;margin-top:1px">%</span>
    <span class="pl" style="left:168px;top:46px;font-size:8px;margin-top:1px">%</span>
    <span class="pl" style="left:168px;top:66px;font-size:8px;margin-top:1px">%</span>
    <span class="pl" style="left:168px;top:86px;font-size:8px;margin-top:1px">%</span>
    <div class="abs" style="left:4px;top:104px;width:11px;height:11px;background:#fff;border:1px solid #888;overflow:hidden"><svg width="9" height="9" viewBox="0 0 9 9" style="display:block"><path d="M0,9 L9,0" stroke="#e0202a" stroke-width="1.400"/></svg></div>
    <div class="abs" style="left:15px;top:104px;width:10px;height:11px;background:#000"></div>
    <div class="abs" style="left:25px;top:104px;width:10px;height:11px;background:#fff"></div>
    <div class="abs" style="left:5px;top:124px;width:170px;height:17px;border:1px solid #2a2a2a;background:linear-gradient(180deg,rgba(255,255,255,.85) 0,rgba(255,255,255,0) 45%,rgba(0,0,0,0) 55%,rgba(0,0,0,.9) 100%),linear-gradient(90deg,#f00 0,#ff0 17%,#0f0 33%,#0ff 50%,#00f 67%,#f0f 83%,#f00 100%)"></div>
  </div>

  <!-- SYMBOLS PANEL -->
  <div class="panel" style="top:159px;height:104px">
    <div class="ptabs">
      <div class="ptab" style="left:5px">色板</div>
      <div class="ptab" style="left:35px">画笔</div>
      <div class="ptab on" style="left:60px;width:32px;padding-left:6px">符号</div>
      <svg class="pmenu" width="12" height="8" viewBox="0 0 12 8"><path d="M0,2 L3.500,2 L1.750,4.500 Z" fill="#ddd"/><path d="M5,1 H12 M5,4 H12 M5,7 H12" stroke="#ddd" stroke-width="1.300"/></svg>
    </div>
    <div class="abs" style="left:3px;top:17px;width:181px;height:69px;border:1px solid #353535"></div>
    <svg class="abs" style="left:5px;top:19px" width="156" height="26" viewBox="0 0 156 26">
      <defs><linearGradient id="sb" x1="0" y1="0" x2="0" y2="1"><stop offset="0" stop-color="#dfe8f4"/><stop offset="0.35" stop-color="#7f9fd4"/><stop offset="0.600" stop-color="#2a50a8"/><stop offset="1" stop-color="#5f84c8"/></linearGradient>
      <radialGradient id="so" cx="0.500" cy="0.700" r="0.700"><stop offset="0" stop-color="#f8a020"/><stop offset="0.600" stop-color="#ee6a10"/><stop offset="1" stop-color="#d84808"/></radialGradient></defs>
      <g><rect x="0" y="0" width="25" height="25" fill="#ececec"/><rect x="26" y="0" width="25" height="25" fill="#ececec"/><rect x="52" y="0" width="25" height="25" fill="#ececec"/><rect x="78" y="0" width="25" height="25" fill="#ececec"/><rect x="104" y="0" width="25" height="25" fill="#ececec"/><rect x="130" y="0" width="25" height="25" fill="#ececec"/></g>
      <rect x="2" y="8" width="21" height="10" fill="url(#sb)"/>
      <g fill="#000"><circle cx="38" cy="13" r="5"/><circle cx="33" cy="10" r="2.500"/><circle cx="43" cy="17" r="2.800"/><circle cx="32" cy="19" r="1.800"/><circle cx="44" cy="8" r="1.500"/><circle cx="36" cy="5" r="1.200"/><circle cx="30" cy="14" r="1.200"/><circle cx="47" cy="12" r="1"/><circle cx="40" cy="20" r="2"/><path d="M36,4 L38,10 L41,5 L40,12 Z"/></g>
      <circle cx="64.500" cy="12.500" r="10.500" fill="url(#so)" stroke="#e8841c" stroke-width="1"/><ellipse cx="64.500" cy="7.500" rx="7.500" ry="4" fill="#fbb860" opacity="0.750"/>
      <path d="M98,3.500 H100 M100,3.500 V6 M81,21.500 H83.500 M81,21.500 V19 M100,21.500 H97.500 M100,21.500 V19" stroke="#8a8a8a" stroke-width="0.800" fill="none"/><path d="M81,3.500 H89" stroke="#222" stroke-width="1.500" fill="none"/><path d="M81.500,3 V11" stroke="#333" stroke-width="1" stroke-dasharray="1.500 1" fill="none"/>
      <g fill="none"><circle cx="116.500" cy="12.500" r="8.200" stroke="#9a9a9a" stroke-width="4.600"/><circle cx="116.500" cy="12.500" r="8.200" stroke="#6a6a6a" stroke-width="4.600" stroke-dasharray="1.200 2.100"/><circle cx="116.500" cy="12.500" r="10.500" stroke="#777" stroke-width="0.500"/><circle cx="116.500" cy="12.500" r="5.900" stroke="#777" stroke-width="0.500"/></g>
      <g transform="translate(142.500,12.500)"><g fill="#ee5a50"><ellipse rx="2.200" ry="10.500"/><ellipse rx="2.200" ry="10.500" transform="rotate(30)"/><ellipse rx="2.200" ry="10.500" transform="rotate(60)"/><ellipse rx="2.200" ry="10.500" transform="rotate(90)"/><ellipse rx="2.200" ry="10.500" transform="rotate(120)"/><ellipse rx="2.200" ry="10.500" transform="rotate(150)"/><ellipse rx="1.800" ry="9.500" transform="rotate(15)"/><ellipse rx="1.800" ry="9.500" transform="rotate(45)"/><ellipse rx="1.800" ry="9.500" transform="rotate(75)"/><ellipse rx="1.800" ry="9.500" transform="rotate(105)"/><ellipse rx="1.800" ry="9.500" transform="rotate(135)"/><ellipse rx="1.800" ry="9.500" transform="rotate(165)"/></g><circle r="3.200" fill="#e8c030"/><circle r="1.600" fill="#8a7a20"/></g>
    </svg>
    <div class="abs" style="left:174px;top:18px;width:10px;height:67px;background:#404040;border-left:1px solid #353535"></div>
    <div class="abs" style="left:176px;top:23px;border:3px solid transparent;border-bottom:4px solid #9a9a9a;border-top:0"></div>
    <div class="abs" style="left:176px;top:77px;border:3px solid transparent;border-top:4px solid #9a9a9a;border-bottom:0"></div>
    <svg class="abs" style="left:4px;top:88px" width="180" height="14" viewBox="0 0 180 14">
      <path d="M2,11 V2 H6 L8,4 V11 Z M8,11 V5 H10 L11.500,11 Z" fill="#e0e0e0"/><rect x="13" y="10" width="2" height="1.500" fill="#e0e0e0"/>
      <g fill="none" stroke="#6a6a6a" stroke-width="1.300"><path d="M70,3 V9 H76 M74,7 L76,9 L74,11"/><path d="M88,7 H96 M90,4 C86,4 86,10 90,10 M94,4 C98,4 98,10 94,10"/><rect x="107.500" y="2.500" width="9" height="9"/><path d="M112,2.500 V11.500"/></g>
      <path d="M128,2 H136 V11 H128 Z" fill="#e6e6e6"/><path d="M128,11 V7 H132 V11 Z" fill="#4a4a4a"/>
      <g fill="none" stroke="#6a6a6a" stroke-width="1.300"><path d="M148,4 H158 M150.500,4 V2 H155.500 V4 M149.500,4 V12 H156.500 V4 M151.500,6 V10 M154.500,6 V10"/></g>
    </svg>
  </div>

  <!-- GRADIENT PANEL -->
  <div class="panel" style="top:265px;height:215px">
    <div class="ptabs">
      <div class="ptab" style="left:5px">描边</div>
      <div class="ptab on" style="left:29px;width:38px;padding-left:11px"><svg class="abs" style="left:3px;top:3px" width="6" height="10" viewBox="0 0 6 10"><path d="M0.500,4 L3,1 L5.500,4 Z M0.500,6 L3,9 L5.500,6 Z" fill="#e6e6e6"/></svg>渐变</div>
      <div class="ptab" style="left:71px">透明度</div>
      <svg class="pmenu" width="12" height="8" viewBox="0 0 12 8"><path d="M0,2 L3.500,2 L1.750,4.500 Z" fill="#ddd"/><path d="M5,1 H12 M5,4 H12 M5,7 H12" stroke="#ddd" stroke-width="1.300"/></svg>
    </div>
    <div class="abs" style="left:5px;top:19px;width:23px;height:23px;background:#ed1c24;border:1px solid #f2a8a8"></div>
    <div class="abs" style="left:31px;top:36px;border:2.500px solid transparent;border-top:3px solid #eee;border-bottom:0"></div>
    <div class="abs" style="left:13px;top:55px;width:15px;height:15px;background:#fff;border:1px solid #ccc;overflow:hidden"><svg width="13" height="13" viewBox="0 0 13 13" style="display:block"><rect x="3.500" y="3.500" width="6" height="6" fill="#4a4a4a"/><path d="M0,13 L13,0" stroke="#e0202a" stroke-width="1.500"/></svg></div>
    <div class="abs" style="left:5px;top:47px;width:15px;height:15px;background:#ed1c24;border:1px solid #f2a8a8"></div>
    <svg class="abs" style="left:8px;top:77px" width="14" height="12" viewBox="0 0 14 12"><rect x="0.500" y="1.500" width="5" height="3" fill="#ddd"/><rect x="7.500" y="1.500" width="6" height="3" fill="none" stroke="#ddd"/><rect x="0.500" y="7.500" width="6" height="3" fill="none" stroke="#ddd"/><rect x="8.500" y="7.500" width="5" height="3" fill="#ddd"/></svg>
    <span class="pl" style="left:43px;top:23px">类型 :</span>
    <div class="abs" style="left:73px;top:19px;width:111px;height:15px;background:#5c5c5c;border:1px solid #333"><span class="pl" style="left:4px;top:2px">径向</span><div class="abs" style="right:4px;top:4px;border:3.500px solid transparent;border-top:4.500px solid #f0f0f0;border-bottom:0"></div></div>
    <span class="pl" style="left:43px;top:43px;color:#8a8a8a">描边 :</span>
    <svg class="abs" style="left:74px;top:39px" width="56" height="16" viewBox="0 0 56 16"><g fill="#5e5e5e" stroke="#6e6e6e" stroke-width="1"><rect x="0.500" y="0.500" width="16" height="15"/><rect x="19.500" y="0.500" width="16" height="15"/><rect x="38.500" y="0.500" width="16" height="15"/></g><g fill="none" stroke="#7e7e7e" stroke-width="2"><path d="M5,13 V5 H13"/><path d="M24,13 V5 H32"/><path d="M43,13 V5 H51"/></g></svg>
    <svg class="abs" style="left:58px;top:62px" width="13" height="11" viewBox="0 0 13 11"><path d="M1,10 H12 M1,10 L9,1" stroke="#e6e6e6" stroke-width="1.200" fill="none"/><path d="M6.500,10 A5.500,5.500 0 0 0 5,5.700" stroke="#e6e6e6" stroke-width="1" fill="none"/></svg>
    <div class="pf" style="left:73px;top:60px;width:40px;height:15px">-3.8°</div>
    <div class="dd" style="left:114px;top:60px;width:11px;height:15px;background:#4e4e4e"></div>
    <svg class="abs" style="left:56px;top:81px" width="16" height="15" viewBox="0 0 16 15"><path d="M3,1 V14 M1,3 L3,0.500 L5,3 M1,12 L3,14.500 L5,12" stroke="#e6e6e6" stroke-width="1.100" fill="none"/><ellipse cx="11" cy="8.500" rx="4" ry="3" fill="none" stroke="#e6e6e6" stroke-width="1.200"/><path d="M6,13.500 H16" stroke="#e6e6e6" stroke-width="1"/></svg>
    <div class="pf" style="left:73px;top:80px;width:40px;height:15px">107%</div>
    <div class="dd" style="left:114px;top:80px;width:11px;height:15px;background:#4e4e4e"></div>
    <div class="abs" style="left:75px;top:96px;width:53px;height:43px;background:linear-gradient(90deg,#434343 0 14px,#474747 14px 15px,#434343 15px 40px,#484848 40px 41px,#444 41px)"></div>
  </div>
</div>

</body>
</html>
